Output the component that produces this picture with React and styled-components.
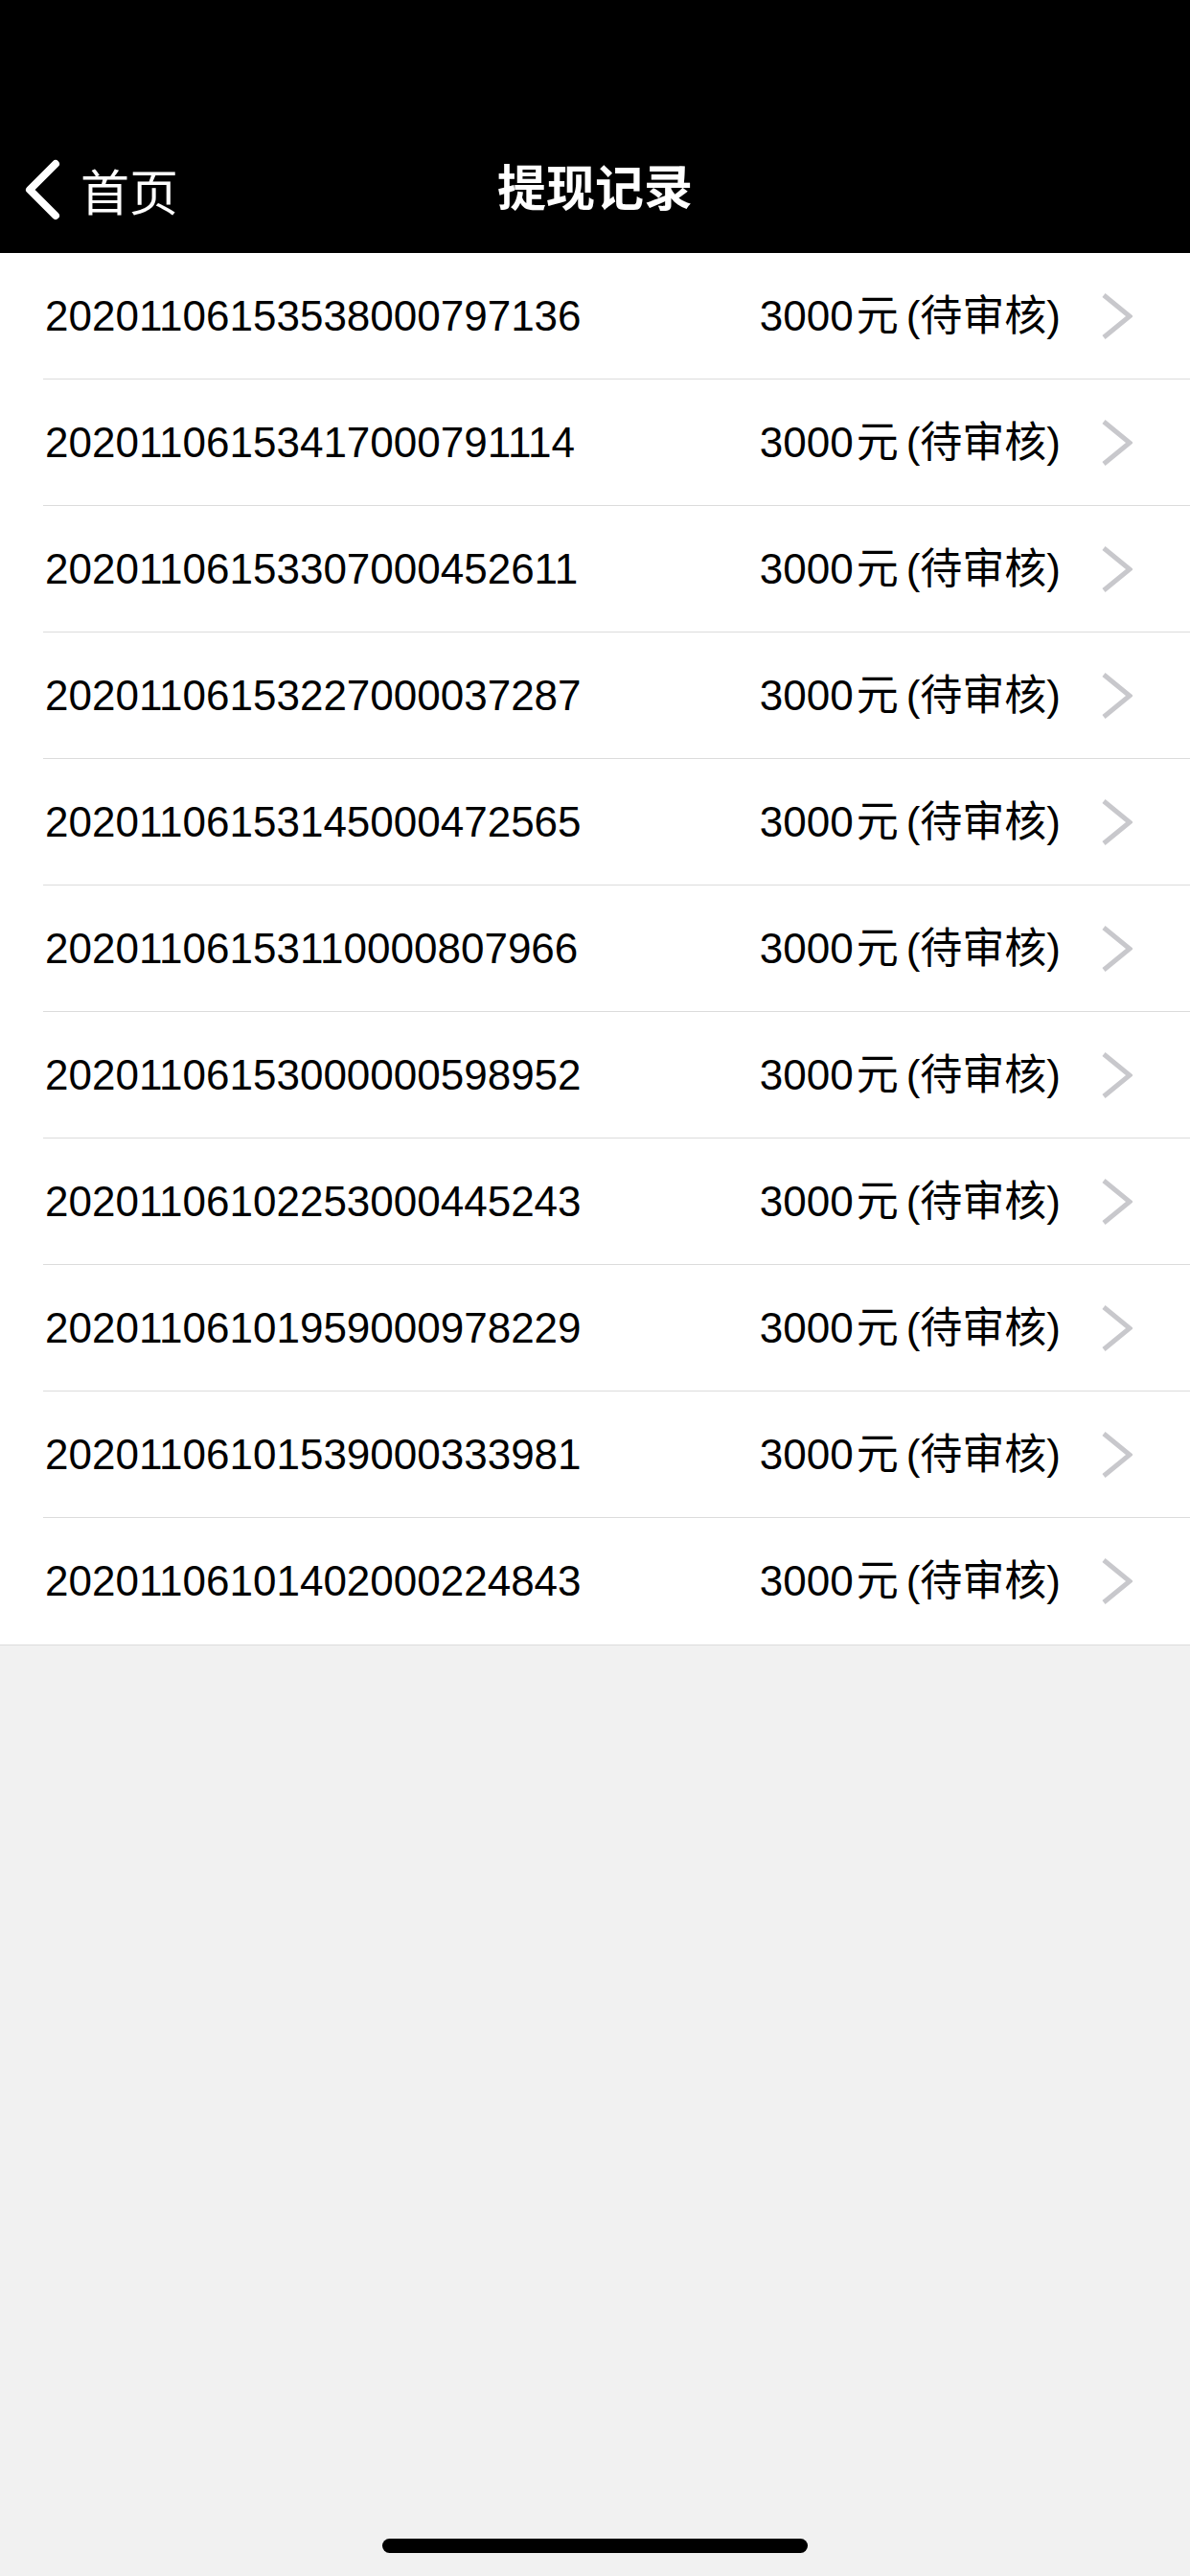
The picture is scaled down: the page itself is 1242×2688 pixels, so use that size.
import React from 'react';
import styled, { createGlobalStyle } from 'styled-components';

const GlobalStyle = createGlobalStyle`
  html, body {
    margin: 0;
    padding: 0;
    background-color: #F1F1F1;
  }

  body {
    font-family: "Liberation Sans", "Noto Sans CJK SC", sans-serif;
    color: #000000;
  }
`;

const StyledPage = styled.div`
  display: flex;
  flex-direction: column;
  box-sizing: border-box;

  width: 1242px;
  min-height: 2688px;

  background-color: #F1F1F1;
`;

const StyledHeader = styled.header`
  display: flex;
  flex-direction: column;
  justify-content: flex-end;
  box-sizing: border-box;

  height: 264px;

  background-color: #000000;
`;

const StyledNavBar = styled.div`
  display: grid;
  grid-template-columns: 1fr auto 1fr;
  align-items: center;

  height: 132px;
`;

const StyledBackButton = styled.div`
  display: flex;
  align-items: center;
  gap: 20px;

  padding-left: 24px;

  font-size: 51px;
  color: #FFFFFF;
`;

const StyledTitle = styled.h1`
  margin: 0;

  font-weight: 700;
  font-size: 51px;
  line-height: 60px;
  color: #FFFFFF;
`;

const StyledList = styled.div`
  display: flex;
  flex-direction: column;

  padding-left: 45px;
  border-bottom: 1px solid #DCDCDC;

  background-color: #FFFFFF;
`;

const StyledRow = styled.div`
  display: flex;
  align-items: center;
  box-sizing: border-box;

  height: 132px;
  padding-right: 60px;
  border-bottom: ${({ last }) => (last ? 'none' : '1px solid #DCDCDC')};

  font-size: 44px;
  line-height: 52px;
`;

const StyledOrderNo = styled.span`
  flex: 1;
  padding-left: 2px;
  color: #000000;
`;

const StyledAmount = styled.span`
  color: #000000;
  white-space: nowrap;
`;

const StyledUnit = styled.span`
  margin-left: 3px;
`;

const StyledStatus = styled.span`
  margin-left: 8px;
`;

const StyledChevron = styled.svg`
  flex-shrink: 0;
  margin-left: 41px;
`;

const StyledHomeBar = styled.div`
  display: flex;
  justify-content: center;

  margin-top: auto;
  padding-bottom: 24px;

  &::after {
    content: '';
    width: 444px;
    height: 15px;
    border-radius: 8px;
    background-color: #000000;
  }
`;

const records = [
  '20201106153538000797136',
  '20201106153417000791114',
  '20201106153307000452611',
  '20201106153227000037287',
  '20201106153145000472565',
  '20201106153110000807966',
  '20201106153000000598952',
  '20201106102253000445243',
  '20201106101959000978229',
  '20201106101539000333981',
  '20201106101402000224843',
];

const BackIcon = () => (
  <svg width="40" height="64" viewBox="0 0 40 64">
    <polyline
      points="34,5 7,32 34,59"
      fill="none"
      stroke="#FFFFFF"
      strokeWidth="8"
      strokeLinecap="round"
      strokeLinejoin="round"
    />
  </svg>
);

const ArrowIcon = () => (
  <StyledChevron width="34" height="50" viewBox="0 0 34 50">
    <polyline
      points="4,3 31,25 4,47"
      fill="none"
      stroke="#C8C8CC"
      strokeWidth="5"
    />
  </StyledChevron>
);

export default function App() {
  return (
    <>
      <GlobalStyle />
      <StyledPage>
        <StyledHeader>
          <StyledNavBar>
            <StyledBackButton>
              <BackIcon />
              <span>首页</span>
            </StyledBackButton>
            <StyledTitle>提现记录</StyledTitle>
            <div />
          </StyledNavBar>
        </StyledHeader>
        <StyledList>
          {records.map((no, i) => (
            <StyledRow key={no} last={i === records.length - 1}>
              <StyledOrderNo>{no}</StyledOrderNo>
              <StyledAmount>
                3000
                <StyledUnit>元</StyledUnit>
                <StyledStatus>(待审核)</StyledStatus>
              </StyledAmount>
              <ArrowIcon />
            </StyledRow>
          ))}
        </StyledList>
        <StyledHomeBar />
      </StyledPage>
    </>
  );
}
